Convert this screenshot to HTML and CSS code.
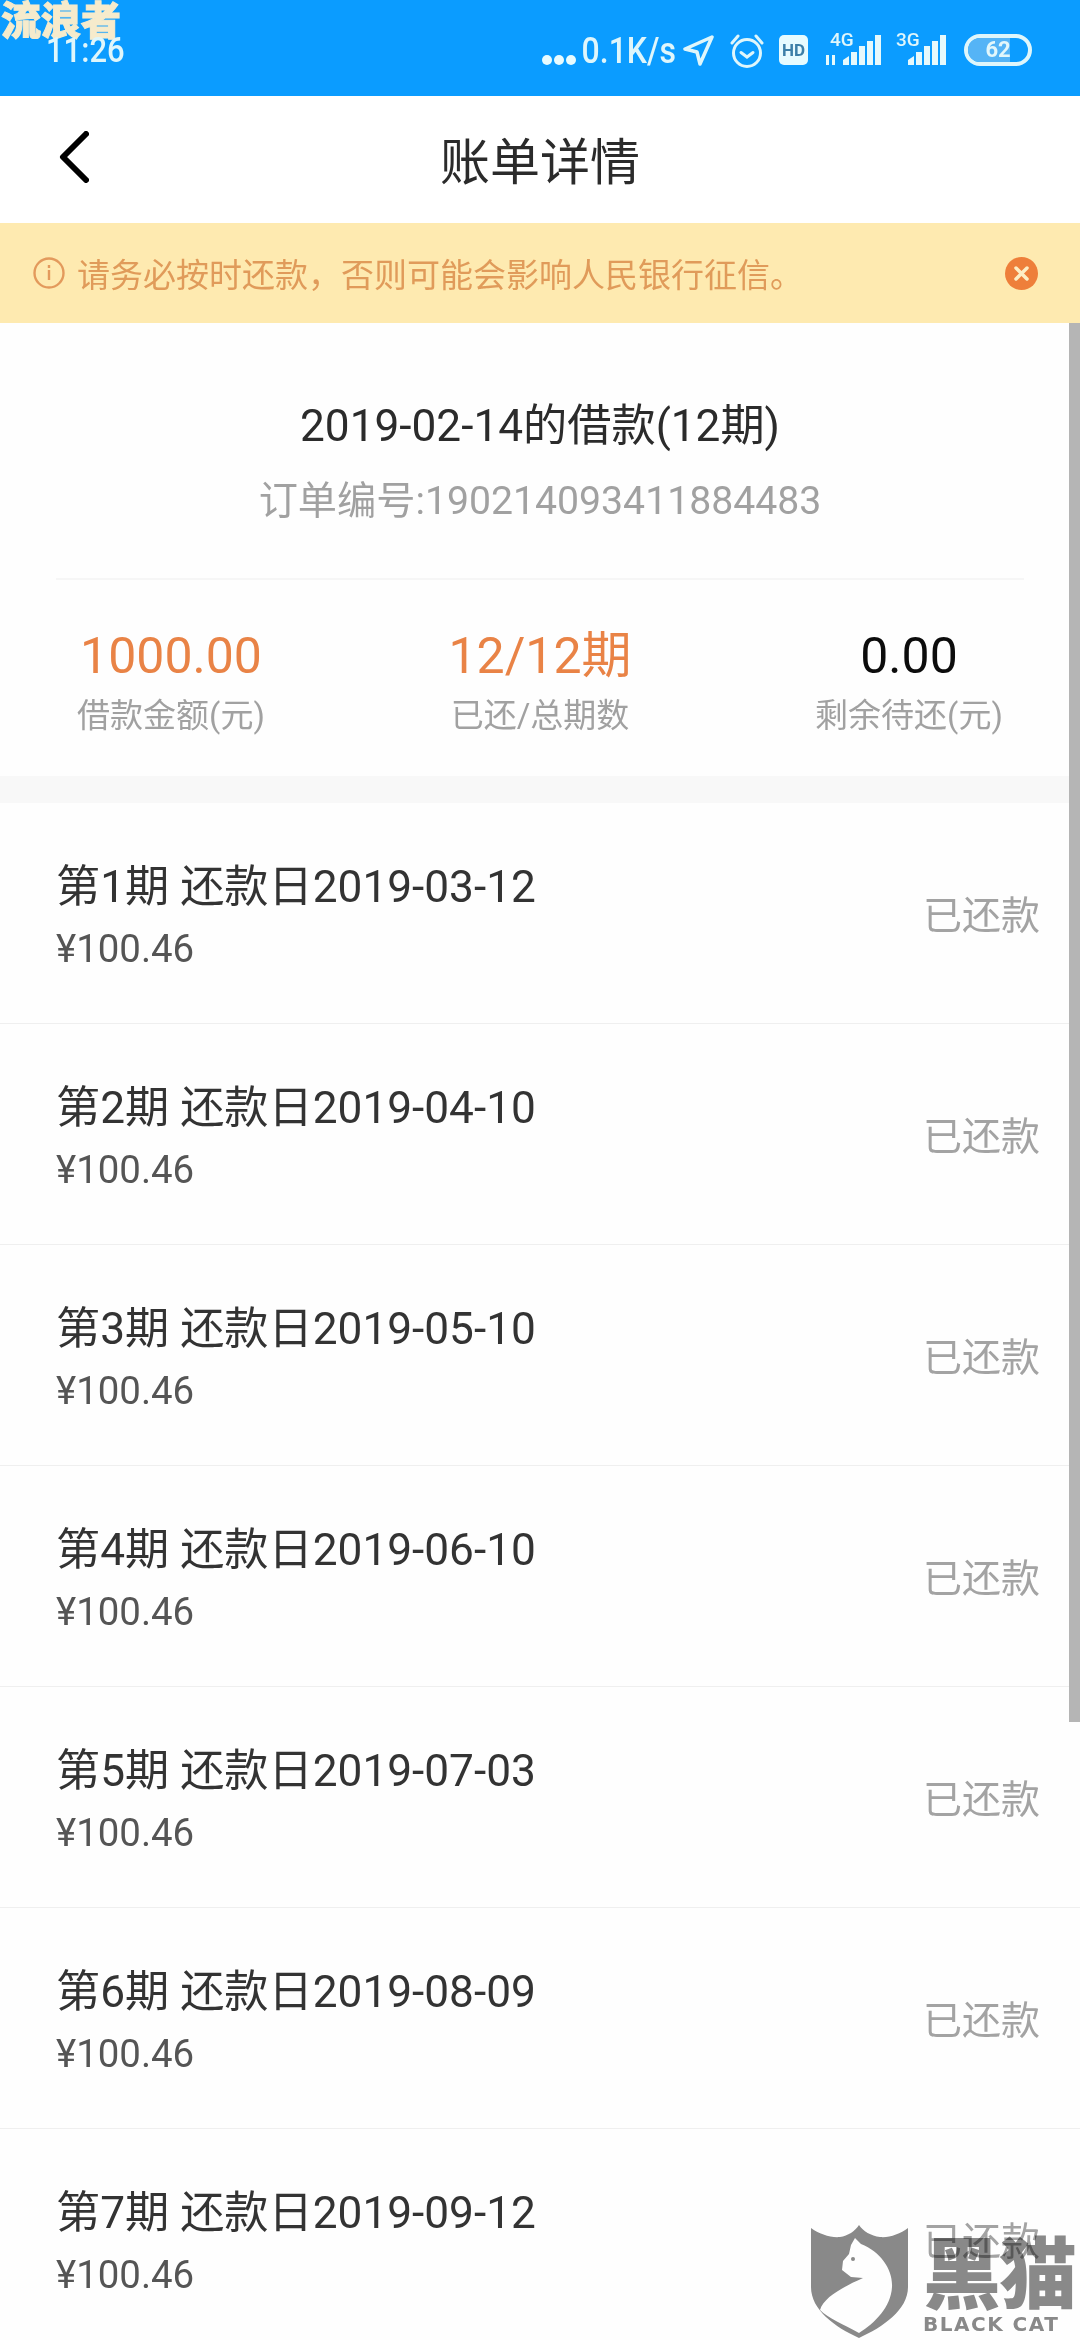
FILE: index.html
```html
<!DOCTYPE html>
<html lang="zh-CN">
<head>
<meta charset="utf-8">
<title>账单详情</title>
<link rel="stylesheet" href="styles.css">
</head>
<body>
<div class="page">
  <div class="status">
    <span class="stamp">流浪者</span>
    <span class="time">11:26</span>
    <div class="status-right">
      <span class="dots"><i></i><i></i><i></i></span>
      <span class="speed">0.1K/s</span>
      <svg class="ic-arrow" width="31" height="31" viewBox="0 0 31 31"><path d="M29 2 2 14l12 3 3 12z" fill="none" stroke="#dff6fb" stroke-width="3.500" stroke-linejoin="round"/></svg>
      <svg class="ic-alarm" width="36" height="36" viewBox="0 0 36 36" fill="none" stroke="#dff6fb" stroke-width="3" stroke-linecap="round"><circle cx="18" cy="20" r="13.500"/><path d="M12 19.500l6 4.500 6-4.500"/><path d="M3 10 9 3M33 10l-6-7"/></svg>
      <span class="ic-hd">HD</span>
      <svg class="ic-sig4" width="60" height="42" viewBox="0 -8 60 42"><text x="5" y="13" class="net">4G</text><g fill="#e6f9fc"><path d="M1 22h3v10H1zM7 22h3v10H7z"/><path d="M18 27l6-4v9h-6zM26 19h6v13h-6zM34 13h6v19h-6zM42 8h6v24h-6zM50 2h6v30h-6z"/></g></svg>
      <svg class="ic-sig3" width="54" height="42" viewBox="0 -8 54 42"><text x="0" y="13" class="net">3G</text><path d="M12 27l6-4v9h-6zM20 19h6v13h-6zM28 13h6v19h-6zM36 8h6v24h-6zM44 2h6v30h-6z" fill="#e6f9fc"/></svg>
      <span class="ic-batt"><span class="batt-level"></span><span class="batt-num">62</span></span>
    </div>
  </div>

  <header class="head">
    <svg class="back" width="30" height="52" viewBox="0 0 30 52"><path d="M27 3 4 26l23 23" fill="none" stroke="#000" stroke-width="6" stroke-linecap="round" stroke-linejoin="round"/></svg>
    <h1 class="head-title">账单详情</h1>
  </header>

  <div class="notice">
    <svg class="notice-ic" width="32" height="32" viewBox="0 0 32 32" fill="none" stroke="#e39a5c" stroke-width="2.400"><circle cx="16" cy="16" r="14.500"/><path d="M16 13v10M16 8v3"/></svg>
    <span class="notice-text">请务必按时还款，否则可能会影响人民银行征信。</span>
    <svg class="notice-close" width="33" height="33" viewBox="0 0 33 33"><circle cx="16.500" cy="16.500" r="16.500" fill="#ee7f3a"/><path d="M11 11l11 11M22 11 11 22" stroke="#fdeec5" stroke-width="3.500" stroke-linecap="round"/></svg>
  </div>

  <section class="summary">
    <div class="loan-title">2019-02-14的借款(12期)</div>
    <div class="order">订单编号:190214093411884483</div>
    <div class="stats">
      <div class="stat"><div class="num orange">1000.00</div><div class="lab">借款金额(元)</div></div>
      <div class="stat"><div class="num orange">12/12期</div><div class="lab">已还/总期数</div></div>
      <div class="stat"><div class="num">0.00</div><div class="lab">剩余待还(元)</div></div>
    </div>
  </section>

  <div class="band"></div>

  <ul class="rows">
    <li class="row"><div><div class="row-title">第1期 还款日2019-03-12</div><div class="row-price">¥100.46</div></div><span class="row-state">已还款</span></li>
    <li class="row"><div><div class="row-title">第2期 还款日2019-04-10</div><div class="row-price">¥100.46</div></div><span class="row-state">已还款</span></li>
    <li class="row"><div><div class="row-title">第3期 还款日2019-05-10</div><div class="row-price">¥100.46</div></div><span class="row-state">已还款</span></li>
    <li class="row"><div><div class="row-title">第4期 还款日2019-06-10</div><div class="row-price">¥100.46</div></div><span class="row-state">已还款</span></li>
    <li class="row"><div><div class="row-title">第5期 还款日2019-07-03</div><div class="row-price">¥100.46</div></div><span class="row-state">已还款</span></li>
    <li class="row"><div><div class="row-title">第6期 还款日2019-08-09</div><div class="row-price">¥100.46</div></div><span class="row-state">已还款</span></li>
    <li class="row"><div><div class="row-title">第7期 还款日2019-09-12</div><div class="row-price">¥100.46</div></div><span class="row-state">已还款</span></li>
  </ul>

  <div class="scrollbar"></div>

  <div class="mark">
    <svg class="mark-shield" width="97" height="113" viewBox="0 0 97 113">
      <path d="M0 3C8 9 20 13 29 12 37 11 44 6 48 0 52 6 60 11 69 12 78 13 89 9 97 3V62C97 85 72 102 48 113 24 102 0 85 0 62Z" fill="#8a8a8a"/>
      <path d="M44 13 50 19C70 27 82 45 81 62 80 82 64 98 48 108 32 99 17 93 9 85 13 72 32 62 52 53L40 52 31 45 32 36 38 29 40 20Z" fill="#fff"/>
      <circle cx="42" cy="34" r="2" fill="#8a8a8a"/>
    </svg>
    <div class="mark-text">
      <div class="mark-cn">黑猫</div>
      <div class="mark-en">BLACK CAT</div>
    </div>
  </div>
</div>
</body>
</html>
```
FILE: styles.css
```css
* { box-sizing: border-box; }
html, body { margin: 0; padding: 0; background: #fff; }
body { font-family: Roboto, "Noto Sans CJK SC", sans-serif; }
.page { position: relative; width: 1080px; height: 2340px; overflow: hidden; background: #fefefe; }

.status { position: relative; height: 96px; background: #0b9cff; color: #dff6fb; display: flex; align-items: flex-start; padding: 30px 48px 0 46px; }
.stamp { position: absolute; left: 1px; top: -2px; font-size: 40px; line-height: 40px; font-weight: 900; color: #f6ebcc; font-family: "Noto Sans CJK SC", sans-serif; -webkit-text-stroke: 1px #f6ebcc; }
.time { font-size: 31px; line-height: 40px; font-weight: 500; transform: scaleY(1.15); }
.status-right { margin-left: auto; display: flex; align-items: flex-start; }
.dots { display: flex; gap: 2px; margin-top: 25px; }
.dots i { display: block; width: 10px; height: 10px; border-radius: 50%; background: #e8fbff; }
.speed { font-size: 32px; line-height: 40px; margin-left: 6px; font-weight: 500; transform: scaleY(1.14); }
.ic-arrow { margin: 5px 0 0 7px; }
.ic-alarm { margin: 3px 0 0 15px; }
.ic-hd { margin: 5px 0 0 14px; width: 29px; height: 30px; border-radius: 5px; background: #e6fbff; color: #3c7fa8; font-size: 17px; font-weight: 700; line-height: 30px; text-align: center; }
.ic-sig4 { margin: -5px 0 0 17px; }
.ic-sig3 { margin: -5px 0 0 11px; }
.net { font-size: 19px; font-weight: 500; fill: #dff6fb; }
.ic-batt { position: relative; margin: 4px 0 0 14px; width: 68px; height: 32px; border: 4px solid #dff6fb; border-radius: 16px; display: block; overflow: hidden; }
.batt-level { position: absolute; left: 0; top: 0; bottom: 0; width: 70%; background: #55b4f6; }
.batt-num { position: relative; display: block; text-align: center; font-size: 22px; line-height: 24px; color: #e3f7fb; font-weight: 700; }

.head { position: relative; height: 127px; background: #fff; display: flex; align-items: center; justify-content: center; }
.back { position: absolute; left: 59px; top: 35px; }
.head-title { margin: 7px 0 0; font-size: 50px; font-weight: 400; color: #2b2b2b; line-height: 60px; }

.notice { height: 100px; background: #feeab0; display: flex; align-items: center; padding: 0 42px 0 33px; color: #e09b5a; }
.notice-ic { flex: none; margin-right: 12px; }
.notice-text { font-size: 33px; line-height: 40px; margin-top: 6px; }
.notice-close { margin-left: auto; flex: none; }

.summary { height: 453px; padding-top: 78px; text-align: center; }
.loan-title { font-size: 44.200px; line-height: 50px; color: #2b2b2b; }
.order { font-size: 39.200px; line-height: 50px; margin-top: 25px; color: #a1a1a1; }
.stats { margin: 52px 56px 0; border-top: 2px solid #f6f6f6; display: flex; justify-content: space-between; padding-top: 48px; }
.stat { width: 230px; }
.num { font-size: 50px; line-height: 56px; color: #0c0c0c; }
.orange { color: #e98346; }
.lab { font-size: 33px; line-height: 42px; margin-top: 11px; color: #a1a1a1; }

.band { height: 27px; background: #f8f8f8; }

.rows { list-style: none; margin: 0; padding: 0; }
.row { height: 221px; border-bottom: 1px solid #efefef; display: flex; align-items: center; justify-content: space-between; padding: 0 40px 0 56px; }
.row-title { font-size: 44.200px; line-height: 52px; color: #333; margin-top: 6px; }
.row-price { font-size: 38.400px; line-height: 44px; color: #555; margin-top: 14px; }
.row-state { font-size: 39px; line-height: 46px; color: #a3a3a3; margin-top: 6px; }

.scrollbar { position: absolute; right: 0; top: 323px; width: 11px; height: 1399px; background: #b5b5b5; }

.mark { position: absolute; left: 811px; top: 2225px; width: 269px; height: 115px; display: flex; mix-blend-mode: multiply; }
.mark-shield { flex: none; }
.mark-text { margin-left: 15px; color: #8a8a8a; font-family: "Noto Sans CJK SC", sans-serif; }
.mark-cn { font-size: 78px; line-height: 88px; font-weight: 900; white-space: nowrap; letter-spacing: -2px; }
.mark-en { font-family: "DejaVu Sans", sans-serif; font-weight: 700; font-size: 20px; line-height: 22px; white-space: nowrap; letter-spacing: 1.500px; }
```
